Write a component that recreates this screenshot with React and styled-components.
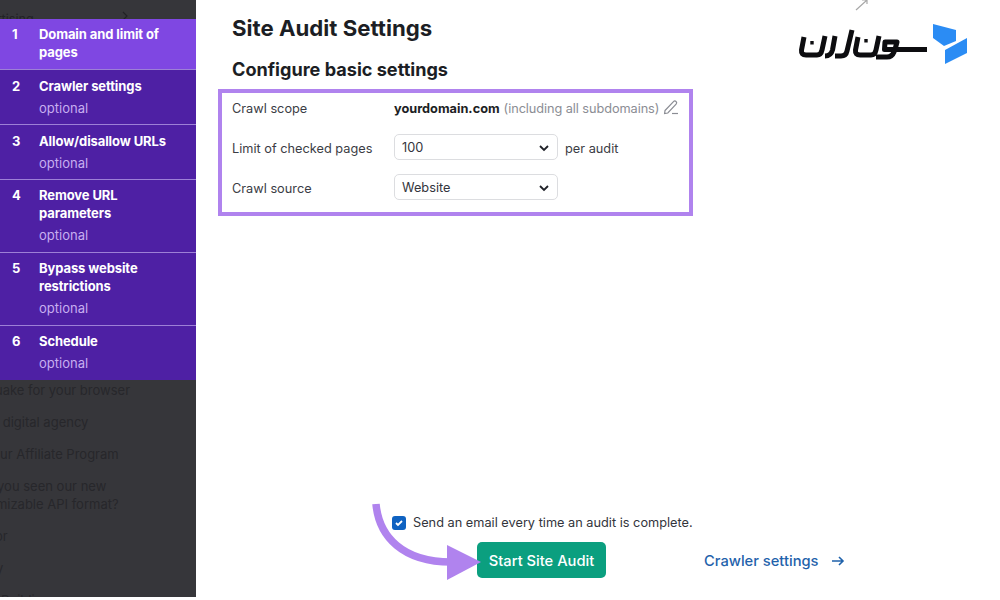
import React from 'react';
import styled, { createGlobalStyle } from 'styled-components';

const Global = createGlobalStyle`
  html, body { margin: 0; padding: 0; background: #fff; }
  body { font-family: Inter, "Liberation Sans", sans-serif; color: #1f2128; }
`;

const Page = styled.div`
  position: relative;
  width: 1000px;
  height: 600px;
  display: flex;
  overflow: hidden;
  background: #fff;
`;

const Sidebar = styled.aside`
  width: 196px;
  height: 597px;
  flex: none;
  background: #36363a;
  overflow: hidden;
  display: flex;
  flex-direction: column;
`;

const TopStrip = styled.div`
  height: 19px;
  flex: none;
  overflow: hidden;
  padding: 11px 67px 0 0;
  box-sizing: border-box;
  display: flex;
  justify-content: space-between;
  align-items: flex-start;
  font-size: 12.6px;
  line-height: 16px;
  color: #222226;
`;

const Steps = styled.ol`
  list-style: none;
  margin: 0;
  padding: 0;
  flex: none;
`;

const Step = styled.li`
  box-sizing: border-box;
  height: ${p => p.$h}px;
  padding: ${p => p.$top}px 12px 0;
  display: flex;
  gap: 19px;
  background: ${p => (p.$active ? '#7f47e2' : '#4e20a4')};
  border-bottom: 1px solid ${p => (p.$last ? 'transparent' : '#9d80d6')};
  color: #fff;
`;

const StepNum = styled.span`
  width: 8px;
  flex: none;
  font-size: 13px;
  font-weight: 700;
  line-height: 18px;
`;

const StepBody = styled.div`
  display: flex;
  flex-direction: column;
`;

const StepTitle = styled.span`
  font-size: 13px;
  font-weight: 700;
  line-height: 18px;
  letter-spacing: -0.1px;
`;

const StepNote = styled.span`
  font-size: 13px;
  line-height: 18px;
  margin-top: 4px;
  color: #c7aef0;
`;

const Ghosts = styled.ul`
  list-style: none;
  margin: 0;
  padding: 1px 0 0;
  font-size: 13px;
  line-height: 18px;
  color: #27272b;
`;

const Ghost = styled.li`
  margin-left: ${p => p.$x || 0}px;
  margin-bottom: ${p => (p.$gap === undefined ? 14 : p.$gap)}px;
  white-space: nowrap;
  list-style: none;
`;

const Main = styled.main`
  flex: 1;
  height: 600px;
  display: flex;
  flex-direction: column;
  padding: 14px 0 0 22px;
  box-sizing: border-box;
`;

const Title = styled.h1`
  margin: 0 0 0 14px;
  font-size: 22.2px;
  line-height: 28px;
  font-weight: 700;
  color: #1c1e24;
`;

const Subtitle = styled.h2`
  margin: 15px 0 0 14px;
  font-size: 18.1px;
  line-height: 24px;
  font-weight: 700;
  color: #1c1e24;
`;

const SettingsBox = styled.section`
  box-sizing: border-box;
  width: 475px;
  height: 127px;
  margin-top: 8px;
  border: 4px solid #b083ee;
  padding: 1px 10px 0;
  display: flex;
  flex-direction: column;
  gap: 14px;
`;

const Row = styled.div`
  display: flex;
  align-items: center;
  height: 26px;
  font-size: 12.75px;
  white-space: nowrap;
  color: #3b3d45;
`;

const RowLabel = styled.span`
  width: 162px;
  flex: none;
  padding-top: 2px;
`;

const Domain = styled.strong`
  font-weight: 700;
  color: #1c1e24;
  padding-top: 2px;
`;

const Muted = styled.span`
  margin-left: 4px;
  color: #8b8d94;
  letter-spacing: -0.08px;
  padding-top: 2px;
`;

const PenIcon = styled.svg`
  margin-left: 4px;
  width: 16px;
  height: 16px;
  flex: none;
`;

const SelectBox = styled.div`
  box-sizing: border-box;
  width: 164px;
  height: 26px;
  padding: 1px 7px 0;
  border: 1px solid #dcdde0;
  border-radius: 5px;
  display: flex;
  align-items: center;
  justify-content: space-between;
  color: #33353c;
`;

const Chevron = styled.svg`
  width: 12px;
  height: 12px;
`;

const Suffix = styled.span`
  margin-left: 7px;
  padding-top: 2px;
`;

const Footer = styled.div`
  margin-top: auto;
  padding: 0 0 22px 174px;
  display: flex;
  flex-direction: column;
`;

const CheckRow = styled.label`
  display: flex;
  align-items: center;
  gap: 7px;
  font-size: 12.75px;
  line-height: 16px;
  color: #33353c;
`;

const CheckBox = styled.span`
  width: 14px;
  height: 14px;
  border-radius: 3px;
  background: #0f62c1;
  display: flex;
  align-items: center;
  justify-content: center;
`;

const Actions = styled.div`
  margin: 11px 0 0 85px;
  display: flex;
  align-items: center;
  gap: 98px;
`;

const StartButton = styled.button`
  width: 129px;
  height: 36px;
  border: 0;
  border-radius: 5px;
  padding: 2px 0 0;
  background: #0b9f7f;
  color: #fff;
  font: 500 14.7px Inter, sans-serif;
`;

const LinkButton = styled.a`
  display: flex;
  align-items: center;
  gap: 12px;
  padding-top: 2px;
  font-size: 14.7px;
  font-weight: 500;
  color: #1f62ab;
`;

const CurveArrow = styled.svg`
  position: absolute;
  left: 365px;
  top: 495px;
  width: 125px;
  height: 95px;
  pointer-events: none;
`;

const Logo = styled.svg`
  position: absolute;
  left: 790px;
  top: 15px;
  width: 190px;
  height: 60px;
`;

const CornerArrow = styled.svg`
  position: absolute;
  left: 852px;
  top: 0;
  width: 20px;
  height: 14px;
`;

const steps = [
  { n: 1, h: 51, top: 6, title: 'Domain and limit of pages', active: true },
  { n: 2, h: 55, top: 7, title: 'Crawler settings', note: true },
  { n: 3, h: 55, top: 7, title: 'Allow/disallow URLs', note: true },
  { n: 4, h: 73, top: 6, title: 'Remove URL parameters', note: true },
  { n: 5, h: 73, top: 6, title: 'Bypass website restrictions', note: true },
  { n: 6, h: 54, top: 6, title: 'Schedule', note: true, last: true },
];

export default function App() {
  return (
    <Page>
      <Global />
      <Sidebar>
        <TopStrip>
          <Ghost as="span" $x={-34} $gap={0}>Advertising</Ghost>
          <svg width="8" height="10" viewBox="0 0 8 10" fill="none" stroke="#222226" strokeWidth="1.2">
            <path d="M2 1l4 4-4 4" />
          </svg>
        </TopStrip>
        <Steps>
          {steps.map(s => (
            <Step key={s.n} $h={s.h} $top={s.top} $active={s.active} $last={s.last}>
              <StepNum>{s.n}</StepNum>
              <StepBody>
                <StepTitle>{s.title}</StepTitle>
                {s.note && <StepNote>optional</StepNote>}
              </StepBody>
            </Step>
          ))}
        </Steps>
        <Ghosts>
          <Ghost $x={-15}>Quake for your browser</Ghost>
          <Ghost $x={-26}>Hire digital agency</Ghost>
          <Ghost $x={-10}>Our Affiliate Program</Ghost>
          <Ghost $x={-38} $gap={0}>Have you seen our new</Ghost>
          <Ghost $x={-38}>customizable API format?</Ghost>
          <Ghost $x={-28}>Editor</Ghost>
          <Ghost $x={-26}>Sally</Ghost>
          <Ghost $x={-28}>Link Building</Ghost>
        </Ghosts>
      </Sidebar>
      <Main>
        <Title>Site Audit Settings</Title>
        <Subtitle>Configure basic settings</Subtitle>
        <SettingsBox>
          <Row>
            <RowLabel>Crawl scope</RowLabel>
            <Domain>yourdomain.com</Domain>
            <Muted>(including all subdomains)</Muted>
            <PenIcon viewBox="0 0 16 16" fill="none" stroke="#8b8d94" strokeWidth="1.2">
              <path d="M2 11.5 10.5 2.6a1.8 1.8 0 0 1 2.6 2.5L4.8 14 1.6 14.6Z" />
              <path d="M9 14.5h6" />
            </PenIcon>
          </Row>
          <Row>
            <RowLabel>Limit of checked pages</RowLabel>
            <SelectBox>
              100
              <Chevron viewBox="0 0 12 12" fill="none" stroke="#1f2128" strokeWidth="1.8">
                <path d="M2 4l4 4 4-4" />
              </Chevron>
            </SelectBox>
            <Suffix>per audit</Suffix>
          </Row>
          <Row>
            <RowLabel>Crawl source</RowLabel>
            <SelectBox>
              Website
              <Chevron viewBox="0 0 12 12" fill="none" stroke="#1f2128" strokeWidth="1.8">
                <path d="M2 4l4 4 4-4" />
              </Chevron>
            </SelectBox>
          </Row>
        </SettingsBox>
        <Footer>
          <CheckRow>
            <CheckBox>
              <svg width="10" height="10" viewBox="0 0 10 10" fill="none" stroke="#fff" strokeWidth="1.8">
                <path d="M2 5l2 2 4-4" />
              </svg>
            </CheckBox>
            Send an email every time an audit is complete.
          </CheckRow>
          <Actions>
            <StartButton>Start Site Audit</StartButton>
            <LinkButton>
              Crawler settings
              <svg width="14" height="12" viewBox="0 0 14 12" fill="none" stroke="#1f62ab" strokeWidth="1.6">
                <path d="M1 6h11M8 2l4 4-4 4" />
              </svg>
            </LinkButton>
          </Actions>
        </Footer>
      </Main>
      <CurveArrow viewBox="0 0 125 95">
        <path d="M11 9C14 42 38 67 86 67" fill="none" stroke="#b083ee" strokeWidth="7.5" />
        <path d="M82 50 116 67 82 85Z" fill="#b083ee" />
      </CurveArrow>
      <CornerArrow viewBox="0 0 20 14" fill="none" stroke="#a8a8a8" strokeWidth="1.2">
        <path d="M4 10 15 0M10 0h5v4" />
      </CornerArrow>
      <Logo viewBox="790 15 190 60">
        <g fill="none" stroke="#0d0d10" strokeWidth="5" strokeLinejoin="round">
          <path d="M804 37 801.5 50Q801 55 806 55H817Q821 55 822 50L825 36" />
          <path d="M812 41v3.5" strokeWidth="3.4" />
          <path d="M835 36 832.5 50Q831 56 825 56" />
          <path d="M852 30 847 51Q846 56 841 56H835" />
          <path d="M858 37 855.5 50Q855 55 860 55H871Q875 55 876 50L879 36" />
          <path d="M866 39v3.5" strokeWidth="3.4" />
          <path d="M885 42H897L895 49.5H884.5Z" />
          <path d="M895 49 894 52Q892 57 887 57H876" />
          <path d="M896 49.5H927" />
        </g>
        <path d="M933 24 956 30V41L944 46 933 38Z" fill="#2b8cf4" />
        <path d="M967 38V53L945 64V50Z" fill="#2b8cf4" />
      </Logo>
    </Page>
  );
}
